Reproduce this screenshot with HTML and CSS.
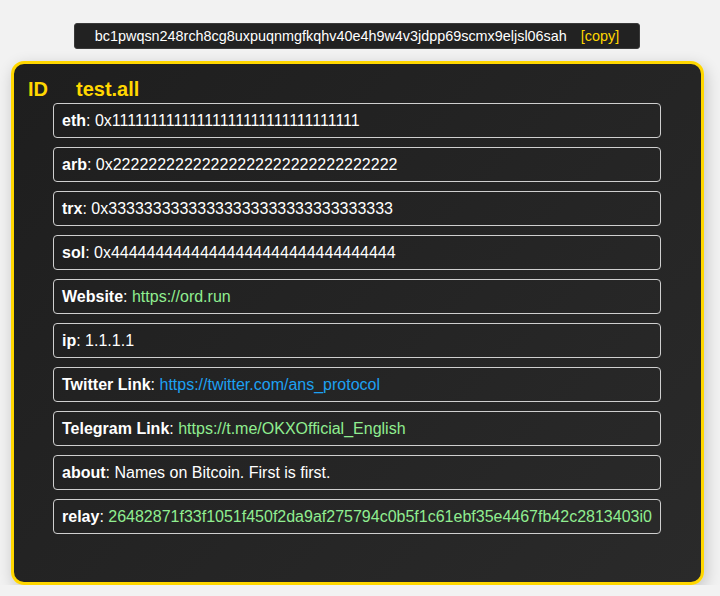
FILE: index.html
```html
<!DOCTYPE html>
<html>
<head>
<meta charset="utf-8">
<link rel="stylesheet" href="styles.css">
</head>
<body>
<div class="page">
  <div class="addr-bar">
    <span class="addr">bc1pwqsn248rch8cg8uxpuqnmgfkqhv40e4h9w4v3jdpp69scmx9eljsl06sah</span>
    <span class="copy">[copy]</span>
  </div>
  <div class="card">
    <div class="card-head"><span class="id-label">ID</span><span class="name">test.all</span></div>
    <div class="rows">
      <div class="row"><b>eth</b>: 0x11111111111111111111111111111111</div>
      <div class="row"><b>arb</b>: 0x22222222222222222222222222222222</div>
      <div class="row"><b>trx</b>: 0x33333333333333333333333333333333</div>
      <div class="row"><b>sol</b>: 0x44444444444444444444444444444444</div>
      <div class="row"><b>Website</b>: <span class="green">https://ord.run</span></div>
      <div class="row"><b>ip</b>: 1.1.1.1</div>
      <div class="row"><b>Twitter Link</b>: <span class="blue">https://twitter.com/ans_protocol</span></div>
      <div class="row"><b>Telegram Link</b>: <span class="green">https://t.me/OKXOfficial_English</span></div>
      <div class="row"><b>about</b>: Names on Bitcoin. First is first.</div>
      <div class="row"><b>relay</b>: <span class="green">26482871f33f1051f450f2da9af275794c0b5f1c61ebf35e4467fb42c2813403i0</span></div>
    </div>
  </div>
</div>
</body>
</html>
```
FILE: styles.css
```css
html, body {
  margin: 0;
  padding: 0;
  background: #f2f2f2;
  font-family: "Liberation Sans", Arial, sans-serif;
}
.page {
  padding: 23px 16px 0 11px;
}
.addr-bar {
  width: 566px;
  box-sizing: border-box;
  margin: 0 0 12px 63px;
  background: #222222;
  border: 1px solid #3a3a3a;
  border-radius: 3px;
  height: 26px;
  display: flex;
  align-items: center;
  justify-content: center;
  gap: 14px;
  font-size: 14.4px;
  color: #ffffff;
}
.copy {
  color: #ffd700;
}
.card {
  width: 693px;
  height: 524px;
  box-sizing: border-box;
  border: 3px solid #ffd700;
  border-radius: 13px;
  background: linear-gradient(135deg, #1e1e1e, #2a2a2a);
  box-shadow: 2px 5px 16px rgba(0, 0, 0, 0.2);
  padding: 14px 40px 0 14px;
}
.card-head {
  display: flex;
  font-size: 20px;
  font-weight: bold;
  color: #ffd700;
  line-height: 23px;
  height: 25px;
}
.id-label {
  width: 48px;
}
.rows {
  margin-left: 25px;
  display: flex;
  flex-direction: column;
  gap: 9px;
}
.row {
  border: 1px solid #cfcfcf;
  border-radius: 4px;
  padding: 8px 8px;
  line-height: 17px;
  font-size: 16px;
  color: #ffffff;
  white-space: nowrap;
}
.green {
  color: #90ee90;
}
.blue {
  color: #1da1f2;
}
```
